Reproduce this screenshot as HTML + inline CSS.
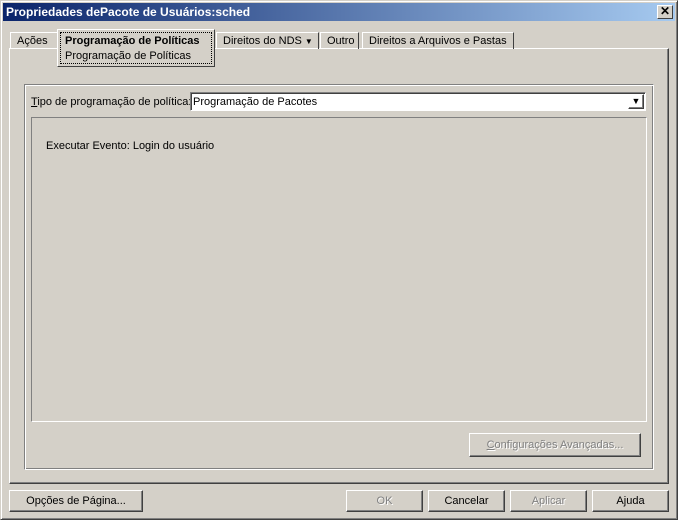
<!DOCTYPE html>
<html><head><meta charset="utf-8"><style>
*{margin:0;padding:0;box-sizing:border-box}
body{width:678px;height:520px;background:#d4d0c8;font-family:"Liberation Sans",sans-serif;font-size:11px;color:#000;position:relative;overflow:hidden}
.a{position:absolute}
.win{left:0;top:0;width:678px;height:520px;border:1px solid;border-color:#d4d0c8 #404040 #404040 #d4d0c8;box-shadow:inset 1px 1px #fff,inset -1px -1px #808080}
.title{left:3px;top:3px;width:672px;height:18px;background:linear-gradient(90deg,#0a246a,#a6caf0);color:#fff;font-weight:bold;font-size:12px;line-height:19px;padding-left:3px}
.x{right:5px;top:5px;width:16px;height:14px;background:#d4d0c8;border:1px solid;border-color:#fff #404040 #404040 #fff;font-size:12px;font-weight:bold;text-align:center;line-height:11px;color:#000}
.tab{top:32px;height:17px;border:1px solid;border-color:#fff #404040 transparent #fff;border-bottom:none;line-height:17px;padding-left:6px}
.btn{height:22px;border:1px solid;border-color:#fff #404040 #404040 #fff;box-shadow:inset -1px -1px #808080;text-align:center;line-height:21px}
.dis{color:#808080;text-shadow:1px 1px #fff}
</style></head><body>
<div class="a win"></div>
<div class="a title">Propriedades dePacote de Usuários:sched</div>
<div class="a x">✕</div>
<div class="a" style="left:9px;top:48px;width:660px;height:436px;border:1px solid;border-color:#fff #404040 #404040 #fff;box-shadow:inset -1px -1px #808080"></div>
<div class="a tab" style="left:10px;width:48px">Ações</div>
<div class="a tab" style="left:216px;width:103px">Direitos do NDS <span style="font-size:8px">▼</span></div>
<div class="a tab" style="left:320px;width:39px">Outro</div>
<div class="a tab" style="left:362px;width:152px">Direitos a Arquivos e Pastas</div>
<div class="a" style="left:57px;top:29px;width:158px;height:38px;background:#d4d0c8;border:1px solid;border-color:#fff #404040 #404040 #fff"></div>
<div class="a" style="left:60px;top:32px;width:152px;height:32px;border:1px dotted #000;padding-left:4px;padding-top:1px;line-height:15px"><b>Programação de Políticas</b><br>Programação de Políticas</div>
<div class="a" style="left:24px;top:84px;width:630px;height:386px;border:1px solid;border-color:#808080 #fff #fff #808080;box-shadow:inset 1px 1px #fff,inset -1px -1px #808080"></div>
<div class="a" style="left:31px;top:96px"><u>T</u>ipo de programação de política:</div>
<div class="a" style="left:190px;top:92px;width:456px;height:19px;background:#fff;border:1px solid;border-color:#808080 #fff #fff #808080;box-shadow:inset 1px 1px #404040;padding:3px 2px">Programação de Pacotes</div>
<div class="a btn" style="left:628px;top:94px;width:16px;height:15px;font-size:9px;line-height:13px">▼</div>
<div class="a" style="left:31px;top:117px;width:616px;height:305px;border:1px solid;border-color:#808080 #fff #fff #808080"></div>
<div class="a" style="left:46px;top:140px">Executar Evento: Login do usuário</div>
<div class="a btn dis" style="left:469px;top:433px;width:172px;height:24px;line-height:23px"><u>C</u>onfigurações Avançadas...</div>
<div class="a btn" style="left:9px;top:490px;width:134px">Opções de Pá<u>g</u>ina...</div>
<div class="a btn dis" style="left:346px;top:490px;width:77px">OK</div>
<div class="a btn" style="left:428px;top:490px;width:77px">Cancelar</div>
<div class="a btn dis" style="left:510px;top:490px;width:77px">Aplicar</div>
<div class="a btn" style="left:592px;top:490px;width:77px">Ajuda</div>
</body></html>
